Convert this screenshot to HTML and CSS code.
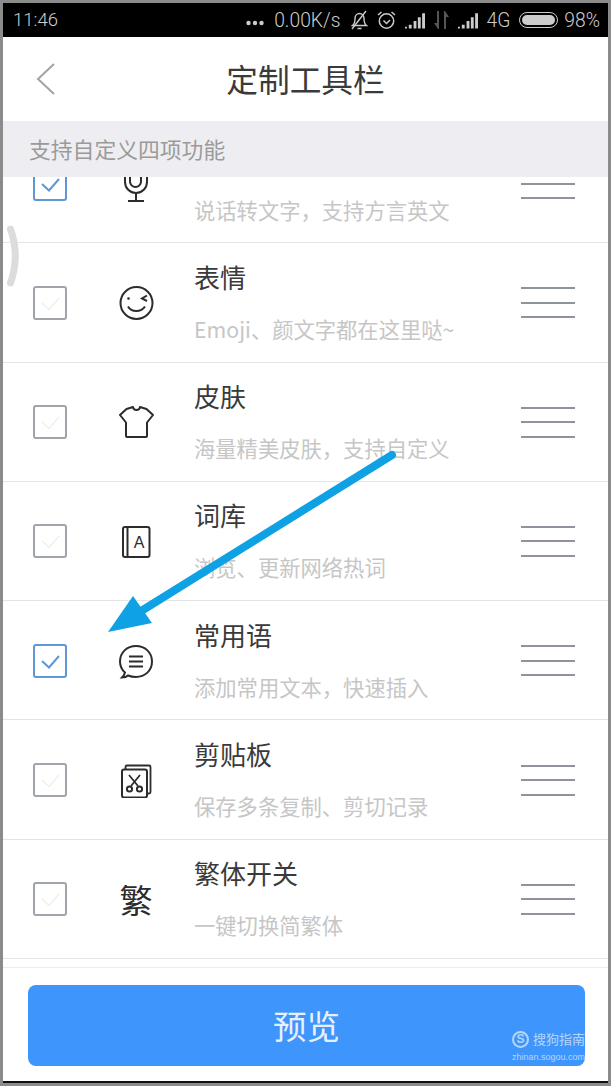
FILE: index.html
```html
<!DOCTYPE html>
<html lang="zh-CN">
<head>
  <meta charset="UTF-8">
  <meta name="viewport" content="width=device-width, initial-scale=1.0">
  <title>定制工具栏</title>
  <link rel="stylesheet" href="styles.css">
</head>
<body>
  <div class="screen">
    <!-- Status bar -->
    <div class="status">
      <span class="time">11:46</span>
      <span class="spacer"></span>
      <svg class="s-dots" width="18" height="6" viewBox="0 0 18 6"><circle cx="2.5" cy="3" r="2.2"/><circle cx="9" cy="3" r="2.2"/><circle cx="15.5" cy="3" r="2.2"/></svg>
      <span class="s-speed">0.00K/s</span>
      <svg class="s-bell" width="17" height="20" viewBox="0 0 17 20" fill="none" stroke="#ccc" stroke-width="1.4"><path d="M1.5 15.5c2-1.5 2.500-3.500 2.500-7 0-3 2-5 4.500-5s4.500 2 4.500 5c0 3.500.5 5.500 2.500 7z"/><path d="M6.500 18.500h4M1 19L15 1"/></svg>
      <svg class="s-alarm" width="19" height="20" viewBox="0 0 19 20" fill="none" stroke="#ccc" stroke-width="1.500"><circle cx="9.500" cy="11" r="7.200"/><path d="M6.500 10.500l3 3 3.500-3.500M1 5l3.500-3M18 5l-3.500-3"/></svg>
      <svg class="s-signal" width="20" height="17" viewBox="0 0 21 17" fill="#ccc"><path d="M0 15h2v2H0zM4 13h3v4H4zM9 9h3v8H9zM13.500 5h3v12h-3zM18 1h3v16h-3z"/></svg>
      <svg class="s-arrows" width="15" height="20" viewBox="0 0 15 20" fill="#555"><path d="M3 1h2v18H4L0 13h3zM10 1h1l4 6h-3v12h-2z"/></svg>
      <svg class="s-signal2" width="20" height="17" viewBox="0 0 21 17" fill="#ccc"><path d="M0 15h2v2H0zM4 13h3v4H4zM9 9h3v8H9zM13.500 5h3v12h-3zM18 1h3v16h-3z"/></svg>
      <span class="s-net">4G</span>
      <span class="s-battery"><span class="s-battery-fill"></span></span>
      <span class="s-pct">98%</span>
    </div>

    <!-- Title bar -->
    <div class="header">
      <svg class="back" width="20" height="32" viewBox="0 0 20 32" fill="none" stroke="#a3a3a3" stroke-width="2"><path d="M18 1L2 16l16 15"/></svg>
      <h1 class="title">定制工具栏</h1>
      <span></span>
    </div>

    <div class="band">支持自定义四项功能</div>

    <!-- Tool list -->
    <div class="list">
      <div class="row first">
        <span class="check on"><svg width="30" height="30" viewBox="0 0 30 30"><path d="M7 15l7 6.500L24 10"/></svg></span>
        <svg class="icon" width="36" height="36" viewBox="0 0 36 36" fill="none" stroke="#2c2c2c" stroke-width="2"><rect x="12" y="-8" width="11" height="29" rx="5.500"/><path d="M7 10v6a11 11 0 0 0 22 0v-6M18 27v7M10 35h16"/></svg>
        <div class="text">
          <div class="name"></div>
          <div class="desc">说话转文字，支持方言英文</div>
        </div>
        <div class="drag"><i></i><i></i><i></i></div>
      </div>

      <div class="row">
        <span class="check"><svg width="30" height="30" viewBox="0 0 30 30"><path d="M7 15l7 6.500L24 10"/></svg></span>
        <svg class="icon" width="36" height="36" viewBox="0 0 36 36" fill="none" stroke="#2c2c2c" stroke-width="2"><circle cx="18.500" cy="18" r="16"/><circle cx="10.500" cy="13.500" r="1.300" fill="#2c2c2c" stroke="none"/><path d="M29 10.500l-5 3 5 2.500M10 21.500c3.500 6 13 6 17 0"/></svg>
        <div class="text">
          <div class="name">表情</div>
          <div class="desc">Emoji、颜文字都在这里哒~</div>
        </div>
        <div class="drag"><i></i><i></i><i></i></div>
      </div>

      <div class="row">
        <span class="check"><svg width="30" height="30" viewBox="0 0 30 30"><path d="M7 15l7 6.500L24 10"/></svg></span>
        <svg class="icon" width="36" height="36" viewBox="0 0 36 36" fill="none" stroke="#2c2c2c" stroke-width="2" stroke-linejoin="round"><path d="M15 3c.5 4 6.500 4 7 0l6.500 2L35 11l-6 7.500V32a1 1 0 0 1-1 1H9a1 1 0 0 1-1-1V18.500L2 11l6.500-6z"/></svg>
        <div class="text">
          <div class="name">皮肤</div>
          <div class="desc">海量精美皮肤，支持自定义</div>
        </div>
        <div class="drag"><i></i><i></i><i></i></div>
      </div>

      <div class="row">
        <span class="check"><svg width="30" height="30" viewBox="0 0 30 30"><path d="M7 15l7 6.500L24 10"/></svg></span>
        <svg class="icon" width="36" height="36" viewBox="0 0 36 36" fill="none" stroke="#2c2c2c" stroke-width="2"><rect x="5" y="4" width="26.500" height="30" rx="2"/><path d="M9.500 4v30"/><text class="book-a" x="21" y="25" text-anchor="middle">A</text></svg>
        <div class="text">
          <div class="name">词库</div>
          <div class="desc">浏览、更新网络热词</div>
        </div>
        <div class="drag"><i></i><i></i><i></i></div>
      </div>

      <div class="row">
        <span class="check on"><svg width="30" height="30" viewBox="0 0 30 30"><path d="M7 15l7 6.500L24 10"/></svg></span>
        <svg class="icon" width="36" height="36" viewBox="0 0 36 36" fill="none" stroke="#2c2c2c" stroke-width="2"><path d="M7 29.500C3.500 26.500 2 22.500 2 18.500 2 9.500 9 3 18 3s16 6.500 16 15.500S27 34 18 34c-3 0-5.500-.5-8-1.500-1.500 1.500-3.500 2-6 2 1.500-1.500 2.500-3 3-5z"/><path d="M11 13.500h14M11 18.500h14M11 23.500h14"/></svg>
        <div class="text">
          <div class="name">常用语</div>
          <div class="desc">添加常用文本，快速插入</div>
        </div>
        <div class="drag"><i></i><i></i><i></i></div>
      </div>

      <div class="row">
        <span class="check"><svg width="30" height="30" viewBox="0 0 30 30"><path d="M7 15l7 6.500L24 10"/></svg></span>
        <svg class="icon" width="36" height="36" viewBox="0 0 36 36" fill="none" stroke="#2c2c2c" stroke-width="2"><rect x="4" y="7.500" width="25" height="28" rx="2"/><path d="M7.500 7.500V5a1.500 1.500 0 0 1 1.500-1.500h22a1.500 1.500 0 0 1 1.500 1.500v25a1.500 1.500 0 0 1-1.500 1.500h-2M11 13l9 11M22 13l-9 11" stroke-width="1.800"/><circle cx="11.500" cy="27" r="2.600"/><circle cx="21.500" cy="27" r="2.600"/></svg>
        <div class="text">
          <div class="name">剪贴板</div>
          <div class="desc">保存多条复制、剪切记录</div>
        </div>
        <div class="drag"><i></i><i></i><i></i></div>
      </div>

      <div class="row">
        <span class="check"><svg width="30" height="30" viewBox="0 0 30 30"><path d="M7 15l7 6.500L24 10"/></svg></span>
        <span class="icon icon-char">繁</span>
        <div class="text">
          <div class="name">繁体开关</div>
          <div class="desc">一键切换简繁体</div>
        </div>
        <div class="drag"><i></i><i></i><i></i></div>
      </div>
    </div>

    <!-- Preview button -->
    <div class="footer">
      <button class="preview" type="button">预览
        <span class="mark">
          <span class="mark-top"><span class="mark-logo">S</span>搜狗指南</span>
          <span class="mark-url">zhinan.sogou.com</span>
        </span>
      </button>
    </div>

    <!-- Annotation on top of the screenshot -->
    <svg class="overlay" width="611" height="1086" viewBox="0 0 611 1086" fill="none">
      <path d="M10.500 229Q20 256 10.500 283" stroke="#dcdcdc" stroke-width="7" stroke-linecap="round"/>
      <path d="M392 455L138 613" stroke="#0ea1e4" stroke-width="8" stroke-linecap="round"/>
      <path d="M108 632L133 596L152 623Z" fill="#0ea1e4"/>
    </svg>
  </div>
</body>
</html>
```

FILE: styles.css
```css
* {
  box-sizing: border-box;
}
html, body {
  margin: 0;
  height: 1086px;
  overflow: hidden;
}
body {
  background-color: #8b8b8b;
  font-family: "Noto Sans CJK SC", "Noto Sans", sans-serif;
  padding: 3px 3px 3px 3px;
}
.screen {
  display: flex;
  flex-direction: column;
  height: 1080px;
  background: white;
  border-bottom: 2px solid #111;
}
.overlay {
  position: absolute;
  left: 0;
  top: 0;
  pointer-events: none;
}

/* status bar */
.status {
  display: flex;
  align-items: center;
  height: 34px;
  padding: 0 8px 0 10px;
  background: black;
  color: #ccc;
  font-family: Roboto, sans-serif;
  font-size: 19.300px;
  font-weight: 300;
  flex: none;
}
.time { font-size: 18.500px; }
.spacer {
  flex: 1;
}
.s-dots { fill: #ccc; margin-top: 6px; }
.s-speed { margin-left: 10px; }
.s-bell { margin-left: 11px; }
.s-alarm { margin-left: 9px; }
.s-signal { margin-left: 9px; }
.s-arrows { margin-left: 9px; }
.s-signal2 { margin-left: 9px; }
.s-net { margin-left: 8px; }
.s-battery {
  width: 39px;
  height: 16px;
  margin-left: 9px;
  padding: 2px;
  border: 1px solid #ccc;
  border-radius: 8px;
}
.s-battery-fill {
  display: block;
  height: 100%;
  background: #ccc;
  border-radius: 6px;
}
.s-pct { margin-left: 6px; }

/* title bar */
.header {
  display: grid;
  grid-template-columns: 1fr auto 1fr;
  align-items: center;
  height: 84px;
  flex: none;
}
.back {
  margin-left: 33px;
  margin-top: -1px;
}
.title {
  margin: 0;
  font-size: 31.700px;
  font-weight: 400;
  color: #3a3a3a;
  line-height: 1;
}
.band {
  height: 56px;
  line-height: 56px;
  padding-left: 26px;
  background-color: #eeeef2;
  color: #9a9a9a;
  font-size: 21.800px;
  flex: none;
}

/* list */
.list {
  flex: 1;
  overflow: hidden;
  min-height: 0;
}
.row {
  display: flex;
  align-items: center;
  height: 119.300px;
  padding-left: 30px;
  padding-top: 1px;
  border-bottom: 1px solid #e4e4e4;
}
.row.first {
  margin-top: -53.100px;
}
.check {
  display: flex;
  align-items: center;
  justify-content: center;
  width: 34px;
  height: 34px;
  border: 2px solid #a0a4ab;
  border-radius: 3px;
  flex: none;
}
.check svg {
  fill: none;
  stroke: #efefef;
  stroke-width: 1.500;
}
.check.on {
  border-color: #5f96d6;
}
.check.on svg {
  stroke: #5f96d6;
  stroke-width: 2;
}
.icon {
  flex: none;
  width: 36px;
  height: 36px;
  margin-left: 51px;
}
.icon-char {
  font-size: 33px;
  line-height: 36px;
  text-align: center;
  color: #2c2c2c;
}
.book-a {
  font-family: "Liberation Sans", sans-serif;
  font-size: 16px;
  fill: #2c2c2c;
  stroke: none;
}
.text {
  flex: 1;
  margin-left: 40px;
  margin-top: -3px;
}
.name {
  height: 36px;
  font-size: 26px;
  line-height: 36px;
  color: #3a3a3a;
}
.desc {
  margin-top: 19px;
  font-size: 21.300px;
  line-height: 30px;
  color: #c6c6c6;
}
.drag {
  display: flex;
  flex-direction: column;
  gap: 12.500px;
  width: 54px;
  margin-right: 33px;
  flex: none;
}
.drag i {
  display: block;
  height: 2px;
  background-color: #8f939b;
}

/* footer */
.footer {
  height: 114px;
  padding: 17px 23px 0 25px;
  border-top: 1px solid #ececec;
  flex: none;
}
.preview {
  position: relative;
  display: block;
  width: 100%;
  height: 81px;
  padding: 0 0 2px;
  overflow: hidden;
  border: none;
  border-radius: 8px;
  background-color: #3e95fb;
  color: #e6f1ff;
  font-family: inherit;
  font-size: 33.500px;
}
.mark {
  position: absolute;
  left: 484px;
  top: 45px;
  width: 73px;
  color: rgba(255, 255, 255, 0.62);
  text-align: left;
  white-space: nowrap;
}
.mark-top {
  display: flex;
  align-items: center;
  gap: 4px;
  font-size: 13px;
  line-height: 18px;
}
.mark-logo {
  flex: none;
  width: 17px;
  height: 17px;
  border: 2px solid rgba(255, 255, 255, 0.62);
  border-radius: 50%;
  font-family: "Liberation Sans", sans-serif;
  font-size: 12px;
  font-weight: bold;
  line-height: 13px;
  text-align: center;
}
.mark-url {
  display: block;
  margin-top: 2px;
  font-family: "Liberation Sans", sans-serif;
  font-size: 9px;
  line-height: 14px;
}
```
